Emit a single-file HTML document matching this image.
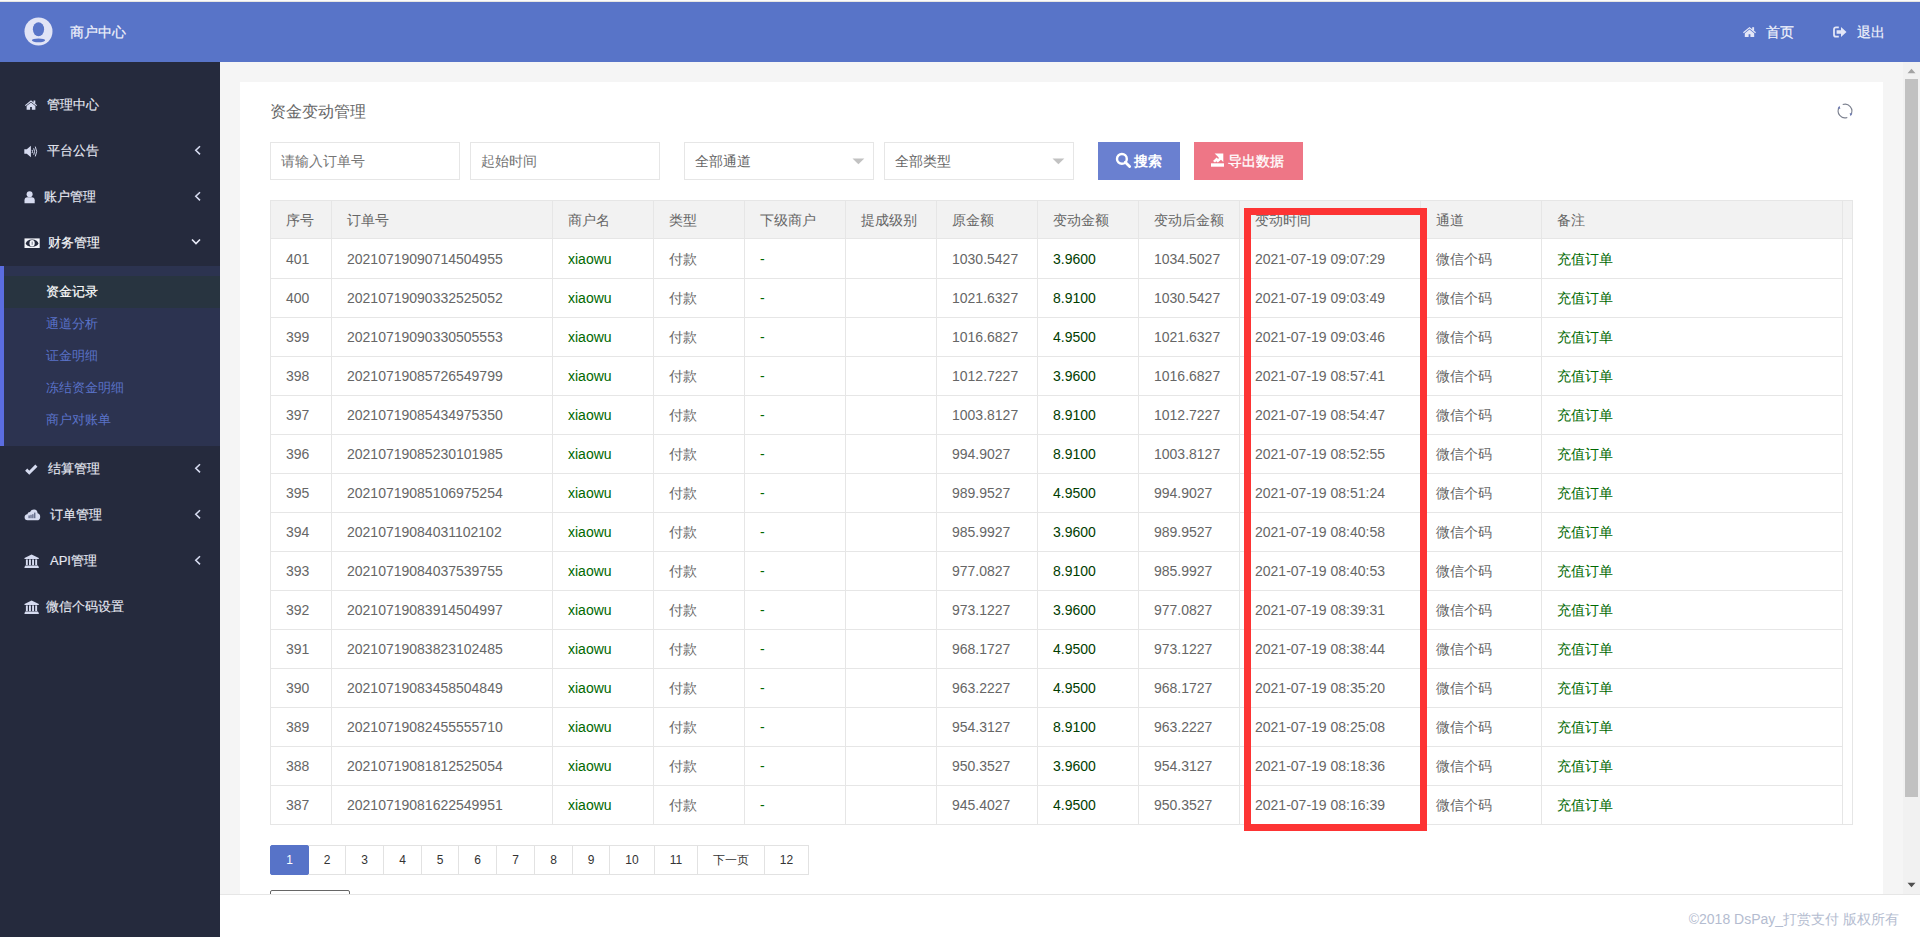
<!DOCTYPE html>
<html><head><meta charset="utf-8">
<style>
*{box-sizing:border-box;margin:0;padding:0}
html,body{width:1920px;height:937px;overflow:hidden;background:#f5f5f5;font-family:"Liberation Sans",sans-serif;color:#666}
.abs{position:absolute}
svg{display:block}
#topline{position:absolute;left:0;top:0;width:1920px;height:2px;background:#fbfbfb;border-bottom:1px solid #e6e5e1}
#header{position:absolute;left:0;top:2px;width:1920px;height:60px;background:#5874c8;color:#fff}
#side{position:absolute;left:0;top:62px;width:220px;height:875px;background:#252a3d}
#content{position:absolute;left:220px;top:62px;width:1683px;height:832px;background:#f5f5f5;overflow:hidden}
#card{position:absolute;left:20px;top:20px;width:1643px;height:900px;background:#fff}
#footer{position:absolute;left:220px;top:894px;width:1700px;height:43px;background:#fff;border-top:1px solid #e6e6e6}
#sb{position:absolute;left:1903px;top:62px;width:17px;height:832px;background:#f1f1f1}
.mi{position:absolute;left:0;width:220px;height:46px;color:#e6e8f2;font-size:13px;line-height:46px}
.mi .t{-webkit-text-stroke:0.15px #e6e8f2}
.mi .t{position:absolute;left:47px;top:0}
.mi svg{position:absolute}
.sub{position:absolute;left:46px;font-size:13px;color:#5a72c8;line-height:32px;height:32px}
#tbl{position:absolute;left:270px;top:200px;width:1583px;height:625px;border:1px solid #e6e6e6}
.hdr{position:absolute;left:0;top:0;width:1581px;height:38px;background:#f2f2f2;border-bottom:1px solid #e6e6e6}
.row{position:absolute;left:0;width:1571px;height:39px;border-bottom:1px solid #e6e6e6}
.c{position:absolute;top:0;height:38px;line-height:38px;padding-left:16px;font-size:14px;white-space:nowrap;color:#666}
.hdr .c{line-height:38px;top:0}
.g{color:#006800}
.dg{color:#003d00}
.vl{position:absolute;top:0;width:1px;height:623px;background:#e6e6e6}
.inp{position:absolute;top:142px;width:190px;height:38px;border:1px solid #e6e6e6;font-size:14px;line-height:36px;padding-left:10px;color:#757575}
.pg{position:absolute;top:845px;height:30px;border:1px solid #e2e2e2;font-size:12px;line-height:28px;text-align:center;color:#333;background:#fff}
.pg.cur{background:#5773c8;border-color:#5773c8;color:#fff;border-radius:2px;z-index:2}
</style></head><body>
<div id="topline"></div>
<div id="header">
  <svg class="abs" style="left:23.5px;top:14.5px" width="29" height="29" viewBox="0 0 29 29"><circle cx="14.5" cy="14.5" r="14" fill="#e1e4f6"/><ellipse cx="14.5" cy="12.3" rx="5.6" ry="7" fill="#5874c8"/><ellipse cx="14.5" cy="23.3" rx="6.6" ry="1.9" fill="#5874c8"/></svg>
  <div class="abs" style="left:70px;top:22px;font-size:14px;line-height:16px;color:#f0f2fb;-webkit-text-stroke:0.2px #f0f2fb">商户中心</div>
  <svg class="abs" style="left:1742px;top:24px" width="15" height="12" viewBox="0 0 15 12"><path d="M1 6.3 L7.5 1 L14 6.3 L13.2 7.2 L7.5 2.6 L1.8 7.2Z" fill="#e4e7f7"/><path d="M2.8 7.2 L7.5 3.4 L12.2 7.2 V11 H8.4 V8.2 H6.6 V11 H2.8Z" fill="#e4e7f7"/><rect x="10.2" y="1.2" width="1.9" height="3.4" fill="#e4e7f7"/></svg>
  <div class="abs" style="left:1766px;top:22px;font-size:14px;line-height:16px;color:#f0f2fb;-webkit-text-stroke:0.2px #f0f2fb">首页</div>
  <svg class="abs" style="left:1833px;top:24px" width="14" height="12" viewBox="0 0 14 12"><path d="M5.8 1.3 H3 Q1 1.3 1 3.3 V8.7 Q1 10.7 3 10.7 H5.8" fill="none" stroke="#e4e7f7" stroke-width="1.8"/><path d="M3.6 4.2 H8 V1 L13.5 6 L8 11 V7.8 H3.6Z" fill="#e4e7f7"/></svg>
  <div class="abs" style="left:1857px;top:22px;font-size:14px;line-height:16px;color:#f0f2fb;-webkit-text-stroke:0.2px #f0f2fb">退出</div>
</div>
<div id="side">
  <div class="mi" style="top:20px">
    <svg style="left:24px;top:17px" width="14" height="12" viewBox="0 0 15 12"><path d="M1 6.3 L7.5 1 L14 6.3 L13.2 7.2 L7.5 2.6 L1.8 7.2Z" fill="#d6dbf0"/><path d="M2.8 7.2 L7.5 3.4 L12.2 7.2 V11 H8.4 V8.2 H6.6 V11 H2.8Z" fill="#d6dbf0"/><rect x="10.2" y="1.2" width="1.9" height="3.4" fill="#d6dbf0"/></svg>
    <span class="t">管理中心</span></div>
  <div class="mi" style="top:66px">
    <svg style="left:24px;top:17px" width="15" height="13" viewBox="0 0 15 13"><path d="M0.3 4.3 H2.8 L6.9 0.7 V12.3 L2.8 8.7 H0.3Z" fill="#d6dbf0"/><path d="M8.1 4.9 Q8.9 6.5 8.1 8.1" fill="none" stroke="#d6dbf0" stroke-width="1"/><path d="M9.7 3.3 Q11.4 6.5 9.7 9.7" fill="none" stroke="#d6dbf0" stroke-width="1"/><path d="M11.3 1.6 Q14 6.5 11.3 11.4" fill="none" stroke="#d6dbf0" stroke-width="1"/></svg>
    <span class="t">平台公告</span>
    <svg style="left:194px;top:17px" width="8" height="11" viewBox="0 0 8 11"><path d="M6 1.2 L1.8 5.3 L6 9.4" fill="none" stroke="#d6dbf0" stroke-width="1.6"/></svg></div>
  <div class="mi" style="top:112px">
    <svg style="left:24px;top:17px" width="12" height="13" viewBox="0 0 12 13"><circle cx="5.6" cy="3.3" r="3" fill="#d6dbf0"/><path d="M0.5 12.2 V9.2 Q0.5 6.2 3.5 6.2 H7.7 Q10.7 6.2 10.7 9.2 V12.2Z" fill="#d6dbf0"/></svg>
    <span class="t" style="left:44px">账户管理</span>
    <svg style="left:194px;top:17px" width="8" height="11" viewBox="0 0 8 11"><path d="M6 1.2 L1.8 5.3 L6 9.4" fill="none" stroke="#d6dbf0" stroke-width="1.6"/></svg></div>
  <div class="mi" style="top:158px">
    <svg style="left:24px;top:18px" width="16" height="11" viewBox="0 0 16 11"><rect x="0.5" y="0.4" width="15.2" height="9.6" fill="#f4f5fb"/><ellipse cx="8.1" cy="5.2" rx="6.2" ry="3.6" fill="#252a3d"/><ellipse cx="8.1" cy="5.2" rx="2.6" ry="3.2" fill="#f4f5fb"/><rect x="7.7" y="3.6" width="0.9" height="3.2" fill="#6a6f80"/></svg>
    <span class="t" style="left:48px;color:#fff">财务管理</span>
    <svg style="left:190px;top:18px" width="12" height="8" viewBox="0 0 12 8"><path d="M2 1.5 L6 5.6 L10 1.5" fill="none" stroke="#e8ebf8" stroke-width="1.6"/></svg></div>
  <div class="abs" style="left:0;top:204px;width:220px;height:180px;background:#2c3350"></div>
  <div class="abs" style="left:0;top:204px;width:4px;height:180px;background:#5b6de0"></div>
  <div class="abs" style="left:4px;top:214px;width:216px;height:32px;background:#283440"></div>
  <div class="sub" style="top:214px;color:#fff;-webkit-text-stroke:0.2px #fff">资金记录</div>
  <div class="sub" style="top:246px">通道分析</div>
  <div class="sub" style="top:278px">证金明细</div>
  <div class="sub" style="top:310px">冻结资金明细</div>
  <div class="sub" style="top:342px">商户对账单</div>
  <div class="mi" style="top:384px">
    <svg style="left:24px;top:18px" width="14" height="11" viewBox="0 0 14 11"><path d="M2.2 5.6 L5.3 8.7 L12.4 1.6" fill="none" stroke="#d6dbf0" stroke-width="3"/></svg>
    <span class="t" style="left:48px">结算管理</span>
    <svg style="left:194px;top:17px" width="8" height="11" viewBox="0 0 8 11"><path d="M6 1.2 L1.8 5.3 L6 9.4" fill="none" stroke="#d6dbf0" stroke-width="1.6"/></svg></div>
  <div class="mi" style="top:430px">
    <svg style="left:24px;top:17px" width="17" height="12" viewBox="0 0 17 12"><path d="M3.5 11.3 Q0.6 11.3 0.6 8.3 Q0.6 5.6 3.3 5.3 Q3.8 2.9 6 2.9 Q7.3 0.4 10.2 0.5 Q13.4 0.7 13.6 4.2 Q16.2 4.8 16.2 7.9 Q16.1 11.3 12.8 11.3Z" fill="#d6dbf0"/><rect x="4.6" y="6.4" width="1" height="2.8" fill="#3b4566"/><rect x="6.5" y="5.8" width="1" height="3.4" fill="#3b4566"/><rect x="8.4" y="5.2" width="1" height="4" fill="#3b4566"/><rect x="10.3" y="3.6" width="1" height="5.6" fill="#3b4566"/></svg>
    <span class="t" style="left:50px">订单管理</span>
    <svg style="left:194px;top:17px" width="8" height="11" viewBox="0 0 8 11"><path d="M6 1.2 L1.8 5.3 L6 9.4" fill="none" stroke="#d6dbf0" stroke-width="1.6"/></svg></div>
  <div class="mi" style="top:476px">
    <svg style="left:24px;top:16px" width="16" height="15" viewBox="0 0 16 15"><path d="M0.5 4 L7.6 0.6 L14.8 4 V5 H0.5Z" fill="#d6dbf0"/><rect x="1.9" y="5.4" width="1.9" height="5.8" fill="#d6dbf0"/><rect x="5" y="5.4" width="1.9" height="5.8" fill="#d6dbf0"/><rect x="8.1" y="5.4" width="1.9" height="5.8" fill="#d6dbf0"/><rect x="11.2" y="5.4" width="1.9" height="5.8" fill="#d6dbf0"/><path d="M1.4 11.4 H13.9 L14.8 13 V14 H0.5 V13Z" fill="#d6dbf0"/></svg>
    <span class="t" style="left:50px">API管理</span>
    <svg style="left:194px;top:17px" width="8" height="11" viewBox="0 0 8 11"><path d="M6 1.2 L1.8 5.3 L6 9.4" fill="none" stroke="#d6dbf0" stroke-width="1.6"/></svg></div>
  <div class="mi" style="top:522px">
    <svg style="left:24px;top:16px" width="16" height="15" viewBox="0 0 16 15"><path d="M0.5 4 L7.6 0.6 L14.8 4 V5 H0.5Z" fill="#d6dbf0"/><rect x="1.9" y="5.4" width="1.9" height="5.8" fill="#d6dbf0"/><rect x="5" y="5.4" width="1.9" height="5.8" fill="#d6dbf0"/><rect x="8.1" y="5.4" width="1.9" height="5.8" fill="#d6dbf0"/><rect x="11.2" y="5.4" width="1.9" height="5.8" fill="#d6dbf0"/><path d="M1.4 11.4 H13.9 L14.8 13 V14 H0.5 V13Z" fill="#d6dbf0"/></svg>
    <span class="t" style="left:46px">微信个码设置</span></div>
</div>
<div id="content">
  <div id="card"></div>
</div>
<div class="abs" style="left:270px;top:103px;font-size:16px;line-height:18px;color:#666">资金变动管理</div>
<svg class="abs" style="left:1837px;top:103px" width="16" height="16" viewBox="0 0 16 16"><path d="M5.7 1.6 A6.8 6.8 0 0 1 13.9 11.4" fill="none" stroke="#7d8290" stroke-width="1.1"/><path d="M10.3 14.4 A6.8 6.8 0 0 1 2.1 4.6" fill="none" stroke="#7d8290" stroke-width="1.1"/><path d="M12.6 10.2 L15.4 10.6 L13.6 13.2Z" fill="#6a78b0"/><path d="M3.4 5.8 L0.6 5.4 L2.4 2.8Z" fill="#6a78b0"/></svg>
<div class="inp" style="left:270px">请输入订单号</div>
<div class="inp" style="left:470px">起始时间</div>
<div class="inp" style="left:684px;color:#666">全部通道<svg class="abs" style="left:167px;top:15px" width="13" height="7" viewBox="0 0 13 7"><path d="M0.5 0.5 H12.3 L6.4 6.3Z" fill="#c2c2c2"/></svg></div>
<div class="inp" style="left:884px;color:#666">全部类型<svg class="abs" style="left:167px;top:15px" width="13" height="7" viewBox="0 0 13 7"><path d="M0.5 0.5 H12.3 L6.4 6.3Z" fill="#c2c2c2"/></svg></div>
<div class="abs" style="left:1098px;top:142px;width:82px;height:38px;background:#6a80d0">
  <svg class="abs" style="left:17px;top:10px" width="17" height="16" viewBox="0 0 17 16"><circle cx="6.9" cy="6.9" r="4.9" fill="none" stroke="#fff" stroke-width="2.4"/><path d="M10.3 10.3 L14.6 14.6" stroke="#fff" stroke-width="2.8" stroke-linecap="round"/></svg>
  <div class="abs" style="left:36px;top:11px;font-size:14px;line-height:16px;color:#fff;font-weight:bold">搜索</div>
</div>
<div class="abs" style="left:1194px;top:142px;width:109px;height:38px;background:#ee7686">
  <svg class="abs" style="left:16px;top:10px" width="15" height="16" viewBox="0 0 15 16"><path d="M1 11.3 H14 V14.7 H1Z" fill="#fff"/><path d="M4.6 1.4 H13.3 V10 L11 7.7 L7.8 10.4 L6 9 L9 6 L7 3.7Z" fill="#fff"/><path d="M3 9 L6.6 5.4 L8.4 7.2 L5 10.5Z" fill="#fff"/></svg>
  <div class="abs" style="left:34px;top:11px;font-size:14px;line-height:16px;color:#fff;-webkit-text-stroke:0.3px #fff">导出数据</div>
</div>
<div id="tbl">
  <div class="hdr"><div class="c " style="left:-1px">序号</div><div class="c " style="left:60px">订单号</div><div class="c " style="left:281px">商户名</div><div class="c " style="left:382px">类型</div><div class="c " style="left:473px">下级商户</div><div class="c " style="left:574px">提成级别</div><div class="c " style="left:665px">原金额</div><div class="c " style="left:766px">变动金额</div><div class="c " style="left:867px">变动后金额</div><div class="c " style="left:968px">变动时间</div><div class="c " style="left:1149px">通道</div><div class="c " style="left:1270px">备注</div></div>
  <div class="row" style="top:39px"><div class="c " style="left:-1px">401</div><div class="c " style="left:60px">20210719090714504955</div><div class="c g" style="left:281px">xiaowu</div><div class="c " style="left:382px">付款</div><div class="c g" style="left:473px">-</div><div class="c " style="left:574px"></div><div class="c " style="left:665px">1030.5427</div><div class="c dg" style="left:766px">3.9600</div><div class="c " style="left:867px">1034.5027</div><div class="c " style="left:968px">2021-07-19 09:07:29</div><div class="c " style="left:1149px">微信个码</div><div class="c g" style="left:1270px">充值订单</div></div><div class="row" style="top:78px"><div class="c " style="left:-1px">400</div><div class="c " style="left:60px">20210719090332525052</div><div class="c g" style="left:281px">xiaowu</div><div class="c " style="left:382px">付款</div><div class="c g" style="left:473px">-</div><div class="c " style="left:574px"></div><div class="c " style="left:665px">1021.6327</div><div class="c dg" style="left:766px">8.9100</div><div class="c " style="left:867px">1030.5427</div><div class="c " style="left:968px">2021-07-19 09:03:49</div><div class="c " style="left:1149px">微信个码</div><div class="c g" style="left:1270px">充值订单</div></div><div class="row" style="top:117px"><div class="c " style="left:-1px">399</div><div class="c " style="left:60px">20210719090330505553</div><div class="c g" style="left:281px">xiaowu</div><div class="c " style="left:382px">付款</div><div class="c g" style="left:473px">-</div><div class="c " style="left:574px"></div><div class="c " style="left:665px">1016.6827</div><div class="c dg" style="left:766px">4.9500</div><div class="c " style="left:867px">1021.6327</div><div class="c " style="left:968px">2021-07-19 09:03:46</div><div class="c " style="left:1149px">微信个码</div><div class="c g" style="left:1270px">充值订单</div></div><div class="row" style="top:156px"><div class="c " style="left:-1px">398</div><div class="c " style="left:60px">20210719085726549799</div><div class="c g" style="left:281px">xiaowu</div><div class="c " style="left:382px">付款</div><div class="c g" style="left:473px">-</div><div class="c " style="left:574px"></div><div class="c " style="left:665px">1012.7227</div><div class="c dg" style="left:766px">3.9600</div><div class="c " style="left:867px">1016.6827</div><div class="c " style="left:968px">2021-07-19 08:57:41</div><div class="c " style="left:1149px">微信个码</div><div class="c g" style="left:1270px">充值订单</div></div><div class="row" style="top:195px"><div class="c " style="left:-1px">397</div><div class="c " style="left:60px">20210719085434975350</div><div class="c g" style="left:281px">xiaowu</div><div class="c " style="left:382px">付款</div><div class="c g" style="left:473px">-</div><div class="c " style="left:574px"></div><div class="c " style="left:665px">1003.8127</div><div class="c dg" style="left:766px">8.9100</div><div class="c " style="left:867px">1012.7227</div><div class="c " style="left:968px">2021-07-19 08:54:47</div><div class="c " style="left:1149px">微信个码</div><div class="c g" style="left:1270px">充值订单</div></div><div class="row" style="top:234px"><div class="c " style="left:-1px">396</div><div class="c " style="left:60px">20210719085230101985</div><div class="c g" style="left:281px">xiaowu</div><div class="c " style="left:382px">付款</div><div class="c g" style="left:473px">-</div><div class="c " style="left:574px"></div><div class="c " style="left:665px">994.9027</div><div class="c dg" style="left:766px">8.9100</div><div class="c " style="left:867px">1003.8127</div><div class="c " style="left:968px">2021-07-19 08:52:55</div><div class="c " style="left:1149px">微信个码</div><div class="c g" style="left:1270px">充值订单</div></div><div class="row" style="top:273px"><div class="c " style="left:-1px">395</div><div class="c " style="left:60px">20210719085106975254</div><div class="c g" style="left:281px">xiaowu</div><div class="c " style="left:382px">付款</div><div class="c g" style="left:473px">-</div><div class="c " style="left:574px"></div><div class="c " style="left:665px">989.9527</div><div class="c dg" style="left:766px">4.9500</div><div class="c " style="left:867px">994.9027</div><div class="c " style="left:968px">2021-07-19 08:51:24</div><div class="c " style="left:1149px">微信个码</div><div class="c g" style="left:1270px">充值订单</div></div><div class="row" style="top:312px"><div class="c " style="left:-1px">394</div><div class="c " style="left:60px">20210719084031102102</div><div class="c g" style="left:281px">xiaowu</div><div class="c " style="left:382px">付款</div><div class="c g" style="left:473px">-</div><div class="c " style="left:574px"></div><div class="c " style="left:665px">985.9927</div><div class="c dg" style="left:766px">3.9600</div><div class="c " style="left:867px">989.9527</div><div class="c " style="left:968px">2021-07-19 08:40:58</div><div class="c " style="left:1149px">微信个码</div><div class="c g" style="left:1270px">充值订单</div></div><div class="row" style="top:351px"><div class="c " style="left:-1px">393</div><div class="c " style="left:60px">20210719084037539755</div><div class="c g" style="left:281px">xiaowu</div><div class="c " style="left:382px">付款</div><div class="c g" style="left:473px">-</div><div class="c " style="left:574px"></div><div class="c " style="left:665px">977.0827</div><div class="c dg" style="left:766px">8.9100</div><div class="c " style="left:867px">985.9927</div><div class="c " style="left:968px">2021-07-19 08:40:53</div><div class="c " style="left:1149px">微信个码</div><div class="c g" style="left:1270px">充值订单</div></div><div class="row" style="top:390px"><div class="c " style="left:-1px">392</div><div class="c " style="left:60px">20210719083914504997</div><div class="c g" style="left:281px">xiaowu</div><div class="c " style="left:382px">付款</div><div class="c g" style="left:473px">-</div><div class="c " style="left:574px"></div><div class="c " style="left:665px">973.1227</div><div class="c dg" style="left:766px">3.9600</div><div class="c " style="left:867px">977.0827</div><div class="c " style="left:968px">2021-07-19 08:39:31</div><div class="c " style="left:1149px">微信个码</div><div class="c g" style="left:1270px">充值订单</div></div><div class="row" style="top:429px"><div class="c " style="left:-1px">391</div><div class="c " style="left:60px">20210719083823102485</div><div class="c g" style="left:281px">xiaowu</div><div class="c " style="left:382px">付款</div><div class="c g" style="left:473px">-</div><div class="c " style="left:574px"></div><div class="c " style="left:665px">968.1727</div><div class="c dg" style="left:766px">4.9500</div><div class="c " style="left:867px">973.1227</div><div class="c " style="left:968px">2021-07-19 08:38:44</div><div class="c " style="left:1149px">微信个码</div><div class="c g" style="left:1270px">充值订单</div></div><div class="row" style="top:468px"><div class="c " style="left:-1px">390</div><div class="c " style="left:60px">20210719083458504849</div><div class="c g" style="left:281px">xiaowu</div><div class="c " style="left:382px">付款</div><div class="c g" style="left:473px">-</div><div class="c " style="left:574px"></div><div class="c " style="left:665px">963.2227</div><div class="c dg" style="left:766px">4.9500</div><div class="c " style="left:867px">968.1727</div><div class="c " style="left:968px">2021-07-19 08:35:20</div><div class="c " style="left:1149px">微信个码</div><div class="c g" style="left:1270px">充值订单</div></div><div class="row" style="top:507px"><div class="c " style="left:-1px">389</div><div class="c " style="left:60px">20210719082455555710</div><div class="c g" style="left:281px">xiaowu</div><div class="c " style="left:382px">付款</div><div class="c g" style="left:473px">-</div><div class="c " style="left:574px"></div><div class="c " style="left:665px">954.3127</div><div class="c dg" style="left:766px">8.9100</div><div class="c " style="left:867px">963.2227</div><div class="c " style="left:968px">2021-07-19 08:25:08</div><div class="c " style="left:1149px">微信个码</div><div class="c g" style="left:1270px">充值订单</div></div><div class="row" style="top:546px"><div class="c " style="left:-1px">388</div><div class="c " style="left:60px">20210719081812525054</div><div class="c g" style="left:281px">xiaowu</div><div class="c " style="left:382px">付款</div><div class="c g" style="left:473px">-</div><div class="c " style="left:574px"></div><div class="c " style="left:665px">950.3527</div><div class="c dg" style="left:766px">3.9600</div><div class="c " style="left:867px">954.3127</div><div class="c " style="left:968px">2021-07-19 08:18:36</div><div class="c " style="left:1149px">微信个码</div><div class="c g" style="left:1270px">充值订单</div></div><div class="row" style="top:585px"><div class="c " style="left:-1px">387</div><div class="c " style="left:60px">20210719081622549951</div><div class="c g" style="left:281px">xiaowu</div><div class="c " style="left:382px">付款</div><div class="c g" style="left:473px">-</div><div class="c " style="left:574px"></div><div class="c " style="left:665px">945.4027</div><div class="c dg" style="left:766px">4.9500</div><div class="c " style="left:867px">950.3527</div><div class="c " style="left:968px">2021-07-19 08:16:39</div><div class="c " style="left:1149px">微信个码</div><div class="c g" style="left:1270px">充值订单</div></div>
  <div class="vl" style="left:60px"></div><div class="vl" style="left:281px"></div><div class="vl" style="left:382px"></div><div class="vl" style="left:473px"></div><div class="vl" style="left:574px"></div><div class="vl" style="left:665px"></div><div class="vl" style="left:766px"></div><div class="vl" style="left:867px"></div><div class="vl" style="left:968px"></div><div class="vl" style="left:1149px"></div><div class="vl" style="left:1270px"></div><div class="vl" style="left:1571px"></div>
</div>
<div class="abs" style="left:1244px;top:208px;width:183px;height:623px;border:7px solid #fd3434"></div>
<div class="pg cur" style="left:270px;width:39px">1</div><div class="pg" style="left:308px;width:38px">2</div><div class="pg" style="left:345px;width:39px">3</div><div class="pg" style="left:383px;width:39px">4</div><div class="pg" style="left:421px;width:38px">5</div><div class="pg" style="left:458px;width:39px">6</div><div class="pg" style="left:496px;width:39px">7</div><div class="pg" style="left:534px;width:39px">8</div><div class="pg" style="left:572px;width:38px">9</div><div class="pg" style="left:609px;width:46px">10</div><div class="pg" style="left:654px;width:44px">11</div><div class="pg" style="left:697px;width:68px">下一页</div><div class="pg" style="left:764px;width:45px">12</div>
<div class="abs" style="left:270px;top:890px;width:80px;height:10px;border:1px solid #666;border-radius:2px"></div>
<div id="sb">
  <svg class="abs" style="left:4px;top:6px" width="9" height="6" viewBox="0 0 9 6"><path d="M0.5 5.3 L4.5 0.8 L8.5 5.3Z" fill="#a3a3a3"/></svg>
  <div class="abs" style="left:2px;top:17px;width:13px;height:718px;background:#c1c1c1"></div>
  <svg class="abs" style="left:4px;top:820px" width="9" height="6" viewBox="0 0 9 6"><path d="M0.5 0.7 L4.5 5.2 L8.5 0.7Z" fill="#505050"/></svg>
</div>
<div id="footer"><div class="abs" style="right:21px;top:16px;font-size:14px;line-height:16px;color:#b4bcd0">©2018 DsPay_打赏支付 版权所有</div></div>
</body></html>
